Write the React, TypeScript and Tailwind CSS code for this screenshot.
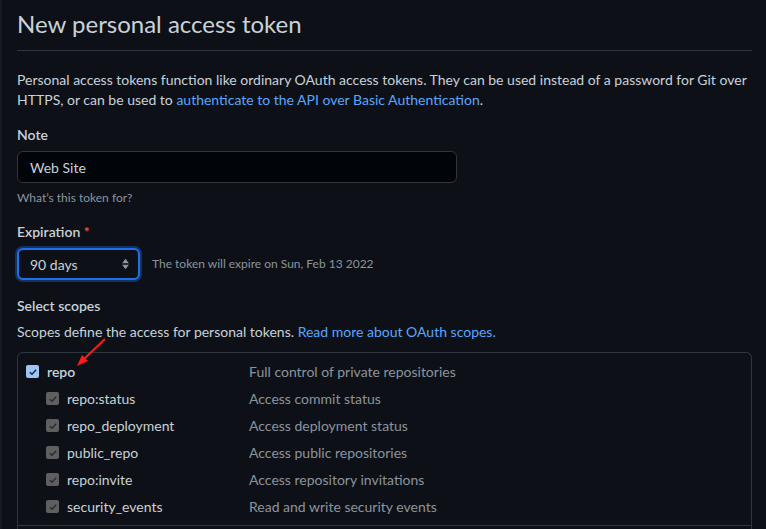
import React from "react";

const scopes = [
  { name: "repo:status", desc: "Access commit status" },
  { name: "repo_deployment", desc: "Access deployment status" },
  { name: "public_repo", desc: "Access public repositories" },
  { name: "repo:invite", desc: "Access repository invitations" },
  { name: "security_events", desc: "Read and write security events" },
];

const Check = ({ disabled }: { disabled?: boolean }) => (
  <span
    className={`flex h-[13px] w-[13px] items-center justify-center rounded-[2px] ${
      disabled ? "bg-[#5f5f5f]" : "bg-[#9cc5f7]"
    }`}
  >
    <svg viewBox="0 0 12 12" className="h-[10px] w-[10px]">
      <path
        d="M2.2 6.3 L4.8 8.8 L9.8 3.4"
        fill="none"
        stroke={disabled ? "#2b2b2b" : "#1a2330"}
        strokeWidth="1.7"
      />
    </svg>
  </span>
);

export default function App() {
  return (
    <div
      className="relative h-[529px] w-[766px] overflow-hidden border-l-2 border-[#161b22] bg-[#0d1117] text-[14px] text-[#c9d1d9]"
      style={{ fontFamily: '"Segoe UI", Lato, sans-serif' }}
    >
      <div className="pl-[15px] pr-[14px]">
        <div className="flex h-[51px] items-center border-b border-[#30363d] pb-[3px]">
          <h1 className="text-[24px] font-normal leading-none text-[#c9d1d9]">
            New personal access token
          </h1>
        </div>

        <p className="mt-[19px] text-[14px] leading-[19.5px]">
          Personal access tokens function like ordinary OAuth access tokens. They can be used instead of a
          password for Git over HTTPS, or can be used to{" "}
          <a className="text-[#58a6ff]">authenticate to the API over Basic Authentication</a>.
        </p>

        <div className="mt-[16px] text-[14px] font-semibold leading-[20px]">Note</div>
        <div className="mt-[6px] flex h-[32px] w-[440px] items-center rounded-[6px] border border-[#30363d] bg-[#010409] px-[12px] text-[14px]">
          Web Site
        </div>
        <div className="mt-[6px] text-[12px] leading-[18px] text-[#8b949e]">What’s this token for?</div>

        <div className="mt-[15px] text-[14px] font-semibold leading-[20px]">
          Expiration <span className="text-[#f85149]">*</span>
        </div>
        <div className="mt-[6px] flex items-center gap-[12px]">
          <div className="flex h-[32px] w-[123px] items-center justify-between rounded-[6px] border-2 border-[#1f6feb] bg-[#0d1117] pl-[11px] pr-[8px] shadow-[0_0_0_2px_rgba(31,111,235,0.35)]">
            <span className="text-[14px]">90 days</span>
            <svg viewBox="0 0 10 14" className="h-[12px] w-[9px]">
              <path d="M5 1 L9 6 H1 Z M5 13 L1 8 H9 Z" fill="#8b949e" />
            </svg>
          </div>
          <span className="text-[12px] text-[#8b949e]">The token will expire on Sun, Feb 13 2022</span>
        </div>

        <div className="mt-[16px] text-[14px] font-semibold leading-[20px]">Select scopes</div>
        <p className="mt-[6px] text-[14px] leading-[20px]">
          Scopes define the access for personal tokens.{" "}
          <a className="text-[#58a6ff]">Read more about OAuth scopes.</a>
        </p>

        <div className="mt-[10px] rounded-t-[6px] border border-b-0 border-[#30363d]">
          <div className="pt-[5px]">
            <div className="flex h-[27px] items-center pl-[8px]">
              <Check />
              <span className="ml-[8px] w-[202px] font-semibold">repo</span>
              <span className="text-[#8b949e]">Full control of private repositories</span>
            </div>
            {scopes.map((s) => (
              <div key={s.name} className="flex h-[27px] items-center pl-[28px]">
                <Check disabled />
                <span className="ml-[8px] w-[182px]">{s.name}</span>
                <span className="text-[#8b949e]">{s.desc}</span>
              </div>
            ))}
          </div>
          <div className="mt-[5px] h-[20px] border-t border-[#30363d]" />
        </div>
      </div>

      <svg className="pointer-events-none absolute left-0 top-0" width="766" height="529">
        <line x1="103" y1="339" x2="82" y2="359" stroke="#ff1a1a" strokeWidth="2" />
        <path d="M75 366 L80 355 L86 361 Z" fill="#ff1a1a" />
      </svg>
    </div>
  );
}
